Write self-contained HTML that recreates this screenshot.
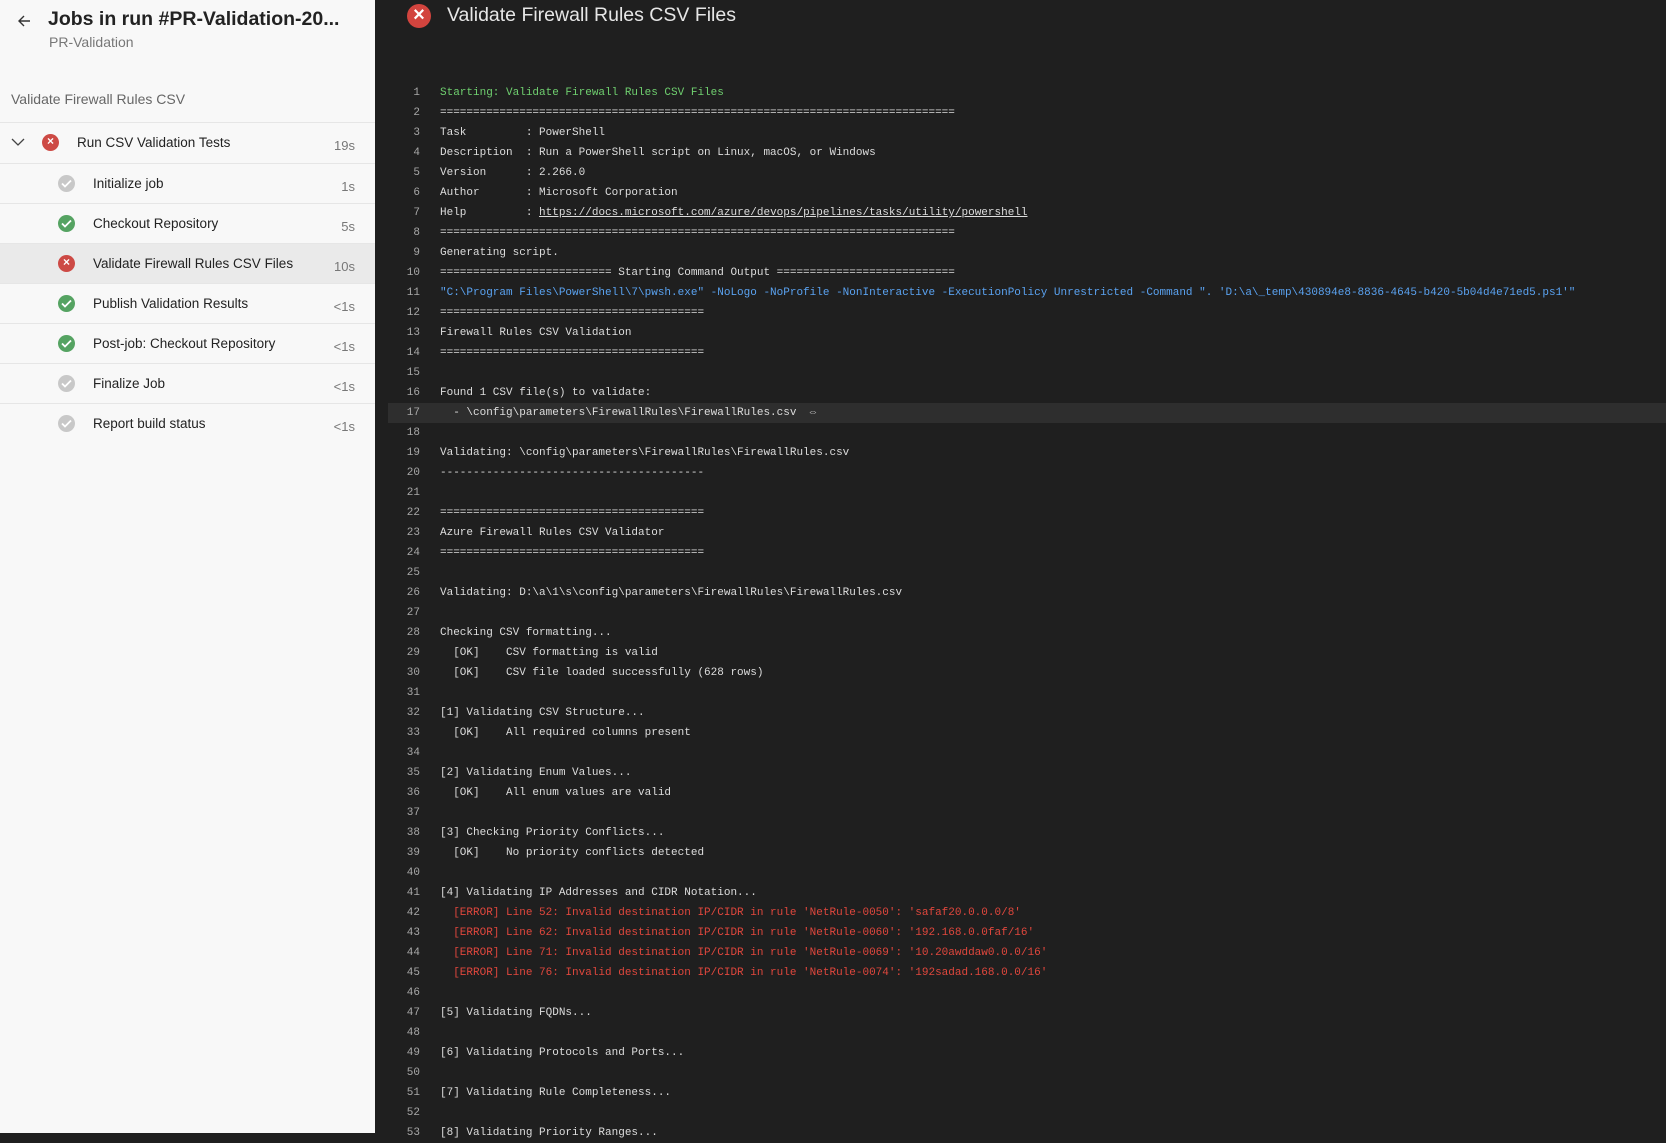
<!DOCTYPE html>
<html><head><meta charset="utf-8"><style>
*{margin:0;padding:0;box-sizing:border-box}
body{width:1666px;height:1133px;overflow:hidden;background:#1f1f1f;font-family:"Liberation Sans",sans-serif;position:relative}
#side{position:absolute;left:0;top:0;width:375px;height:1133px;background:#f8f8f8}
.t{position:absolute;white-space:nowrap}
.row{position:absolute;left:0;width:375px;height:40px;border-top:1px solid #e6e6e6}
.row .n{position:absolute;left:93px;top:12px;font-size:13.5px;color:#222}
.row .d{position:absolute;right:20px;top:15px;font-size:13px;color:#777}
.ic{position:absolute;width:17px;height:17px;border-radius:50%;left:58px;top:11px}
#log{position:absolute;left:388px;top:83px;right:0;font-family:"Liberation Mono",monospace;font-size:11px;color:#ddd}
.l{height:20px;line-height:20px;white-space:pre;position:relative;padding-left:52px}
.l i{font-style:normal;position:absolute;left:0;width:32px;text-align:right;color:#a8a8a8}
.g{color:#6fcf6f}.b{color:#5aa2f0}.r{color:#e0473d}
.hl{background:#2e2e2e}
</style></head><body>
<div id="side">
 <svg class="t" style="left:16px;top:13px" width="16" height="16" viewBox="0 0 16 16"><path d="M14 8H3M8 3L3 8l5 5" stroke="#333" stroke-width="1.4" fill="none"/></svg>
 <div class="t" style="left:48px;top:8px;font-size:19.5px;font-weight:bold;color:#222">Jobs in run #PR-Validation-20...</div>
 <div class="t" style="left:49px;top:34px;font-size:14px;color:#777">PR-Validation</div>
 <div class="t" style="left:11px;top:91px;font-size:14px;color:#666">Validate Firewall Rules CSV</div>
 <div class="row" style="top:122px;height:41px"><svg class="t" style="left:11px;top:14px" width="14" height="10" viewBox="0 0 14 10"><path d="M1 2l6 6 6-6" stroke="#444" stroke-width="1.3" fill="none"/></svg><div class="ic" style="left:42px;background:#cd4a45"><span class="t" style="left:5px;top:0;color:#fff;font-size:12px;font-weight:bold">×</span></div><div class="n" style="left:77px">Run CSV Validation Tests</div><div class="d">19s</div></div>
 <div class="row" style="top:163px"><div class="ic" style="background:#c8c8c8"><svg class="t" style="left:3px;top:4px" width="11" height="9"><path d="M1 4.5l3 3 6-6" stroke="#fff" stroke-width="1.8" fill="none"/></svg></div><div class="n">Initialize job</div><div class="d">1s</div></div>
 <div class="row" style="top:203px"><div class="ic" style="background:#55a362"><svg class="t" style="left:3px;top:4px" width="11" height="9"><path d="M1 4.5l3 3 6-6" stroke="#fff" stroke-width="1.8" fill="none"/></svg></div><div class="n">Checkout Repository</div><div class="d">5s</div></div>
 <div class="row" style="top:243px;background:#eaeaea"><div class="ic" style="background:#cd4a45"><span class="t" style="left:5px;top:0;color:#fff;font-size:12px;font-weight:bold">×</span></div><div class="n">Validate Firewall Rules CSV Files</div><div class="d">10s</div></div>
 <div class="row" style="top:283px"><div class="ic" style="background:#55a362"><svg class="t" style="left:3px;top:4px" width="11" height="9"><path d="M1 4.5l3 3 6-6" stroke="#fff" stroke-width="1.8" fill="none"/></svg></div><div class="n">Publish Validation Results</div><div class="d">&lt;1s</div></div>
 <div class="row" style="top:323px"><div class="ic" style="background:#55a362"><svg class="t" style="left:3px;top:4px" width="11" height="9"><path d="M1 4.5l3 3 6-6" stroke="#fff" stroke-width="1.8" fill="none"/></svg></div><div class="n">Post-job: Checkout Repository</div><div class="d">&lt;1s</div></div>
 <div class="row" style="top:363px"><div class="ic" style="background:#c8c8c8"><svg class="t" style="left:3px;top:4px" width="11" height="9"><path d="M1 4.5l3 3 6-6" stroke="#fff" stroke-width="1.8" fill="none"/></svg></div><div class="n">Finalize Job</div><div class="d">&lt;1s</div></div>
 <div class="row" style="top:403px"><div class="ic" style="background:#c8c8c8"><svg class="t" style="left:3px;top:4px" width="11" height="9"><path d="M1 4.5l3 3 6-6" stroke="#fff" stroke-width="1.8" fill="none"/></svg></div><div class="n">Report build status</div><div class="d">&lt;1s</div></div>
</div>
<div class="t" style="left:407px;top:4px;width:24px;height:24px;border-radius:50%;background:#d2443e;color:#fff;font-size:20px;font-weight:bold;text-align:center;line-height:23px">×</div>
<div class="t" style="left:447px;top:4px;font-size:19.5px;color:#e6e6e6">Validate Firewall Rules CSV Files</div>
<div id="log">
<div class="l g"><i>1</i>Starting: Validate Firewall Rules CSV Files</div>
<div class="l"><i>2</i>==============================================================================</div>
<div class="l"><i>3</i>Task         : PowerShell</div>
<div class="l"><i>4</i>Description  : Run a PowerShell script on Linux, macOS, or Windows</div>
<div class="l"><i>5</i>Version      : 2.266.0</div>
<div class="l"><i>6</i>Author       : Microsoft Corporation</div>
<div class="l"><i>7</i>Help         : <u>https://docs.microsoft.com/azure/devops/pipelines/tasks/utility/powershell</u></div>
<div class="l"><i>8</i>==============================================================================</div>
<div class="l"><i>9</i>Generating script.</div>
<div class="l"><i>10</i>========================== Starting Command Output ===========================</div>
<div class="l b"><i>11</i>"C:\Program Files\PowerShell\7\pwsh.exe" -NoLogo -NoProfile -NonInteractive -ExecutionPolicy Unrestricted -Command ". 'D:\a\_temp\430894e8-8836-4645-b420-5b04d4e71ed5.ps1'"</div>
<div class="l"><i>12</i>========================================</div>
<div class="l"><i>13</i>Firewall Rules CSV Validation</div>
<div class="l"><i>14</i>========================================</div>
<div class="l"><i>15</i></div>
<div class="l"><i>16</i>Found 1 CSV file(s) to validate:</div>
<div class="l hl"><i>17</i>  - \config\parameters\FirewallRules\FirewallRules.csv  <span style="color:#bbb">⇔</span></div>
<div class="l"><i>18</i></div>
<div class="l"><i>19</i>Validating: \config\parameters\FirewallRules\FirewallRules.csv</div>
<div class="l"><i>20</i>----------------------------------------</div>
<div class="l"><i>21</i></div>
<div class="l"><i>22</i>========================================</div>
<div class="l"><i>23</i>Azure Firewall Rules CSV Validator</div>
<div class="l"><i>24</i>========================================</div>
<div class="l"><i>25</i></div>
<div class="l"><i>26</i>Validating: D:\a\1\s\config\parameters\FirewallRules\FirewallRules.csv</div>
<div class="l"><i>27</i></div>
<div class="l"><i>28</i>Checking CSV formatting...</div>
<div class="l"><i>29</i>  [OK]    CSV formatting is valid</div>
<div class="l"><i>30</i>  [OK]    CSV file loaded successfully (628 rows)</div>
<div class="l"><i>31</i></div>
<div class="l"><i>32</i>[1] Validating CSV Structure...</div>
<div class="l"><i>33</i>  [OK]    All required columns present</div>
<div class="l"><i>34</i></div>
<div class="l"><i>35</i>[2] Validating Enum Values...</div>
<div class="l"><i>36</i>  [OK]    All enum values are valid</div>
<div class="l"><i>37</i></div>
<div class="l"><i>38</i>[3] Checking Priority Conflicts...</div>
<div class="l"><i>39</i>  [OK]    No priority conflicts detected</div>
<div class="l"><i>40</i></div>
<div class="l"><i>41</i>[4] Validating IP Addresses and CIDR Notation...</div>
<div class="l r"><i>42</i>  [ERROR] Line 52: Invalid destination IP/CIDR in rule 'NetRule-0050': 'safaf20.0.0.0/8'</div>
<div class="l r"><i>43</i>  [ERROR] Line 62: Invalid destination IP/CIDR in rule 'NetRule-0060': '192.168.0.0faf/16'</div>
<div class="l r"><i>44</i>  [ERROR] Line 71: Invalid destination IP/CIDR in rule 'NetRule-0069': '10.20awddaw0.0.0/16'</div>
<div class="l r"><i>45</i>  [ERROR] Line 76: Invalid destination IP/CIDR in rule 'NetRule-0074': '192sadad.168.0.0/16'</div>
<div class="l"><i>46</i></div>
<div class="l"><i>47</i>[5] Validating FQDNs...</div>
<div class="l"><i>48</i></div>
<div class="l"><i>49</i>[6] Validating Protocols and Ports...</div>
<div class="l"><i>50</i></div>
<div class="l"><i>51</i>[7] Validating Rule Completeness...</div>
<div class="l"><i>52</i></div>
<div class="l"><i>53</i>[8] Validating Priority Ranges...</div>
</div>
</body></html>
